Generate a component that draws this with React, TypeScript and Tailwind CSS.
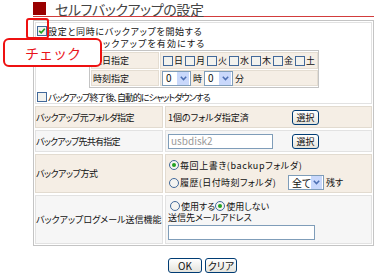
import React from "react";

function Cb({ checked = false }: { checked?: boolean }) {
  return (
    <span className="inline-flex items-center justify-center w-[10px] h-[10px] shrink-0 border border-[#42699a] bg-[#f2f2ee]">
      {checked && (
        <svg width="8" height="8" viewBox="0 0 8 8">
          <path d="M1.2 3.8 L3.2 5.8 L6.8 1.8" fill="none" stroke="#21a121" strokeWidth="1.7" />
        </svg>
      )}
    </span>
  );
}

function Radio({ checked = false }: { checked?: boolean }) {
  return (
    <span className="inline-flex items-center justify-center w-[10px] h-[10px] shrink-0 rounded-full border border-[#42699a] bg-[#f4f4f1]">
      {checked && <span className="w-[4px] h-[4px] rounded-full bg-[#21a121]" />}
    </span>
  );
}

function Sel({ value, w }: { value: string; w: string }) {
  return (
    <span className={"inline-flex items-center h-[15px] border border-[#7f9db9] bg-white shrink-0 " + w}>
      <span className="flex-1 pl-[3px] text-[10px] whitespace-nowrap">{value}</span>
      <span className="flex items-center justify-center w-[12px] h-[13px] bg-[#c9d8fb] mr-px">
        <svg width="7" height="5" viewBox="0 0 7 5">
          <path d="M0.8 0.8 L3.5 3.6 L6.2 0.8" fill="none" stroke="#4d6fb3" strokeWidth="1.5" />
        </svg>
      </span>
    </span>
  );
}

function Btn({ label, w }: { label: string; w: string }) {
  return (
    <span
      className={
        "inline-flex items-center justify-center h-[15px] rounded-[3px] border border-[#003c74] bg-linear-to-b from-white to-[#e4e3dc] text-[9px] shrink-0 " +
        w
      }
    >
      {label}
    </span>
  );
}

const days = ["日", "月", "火", "水", "木", "金", "土"];

export default function App() {
  return (
    <div className="relative w-[380px] h-[277px] bg-white overflow-hidden text-[9px] leading-none text-[#111] [font-family:'Noto_Sans_CJK_JP',sans-serif] [font-feature-settings:'palt']">
      <div className="ml-[33px] w-[341px] pt-[2px]">
        {/* title */}
        <div className="flex items-center h-[13px]">
          <div className="w-[13px] h-[13px] bg-[#990000]" />
          <div className="ml-[9px] text-[14px] tracking-[-0.4px] text-[#444]">セルフバックアップの設定</div>
        </div>
        <div className="mt-[1px] h-px bg-[#d23c3c]" />

        {/* panel */}
        <div className="mt-[3px] border border-[#c4c4c4] p-px flex flex-col gap-[2px]">
          {/* top cell */}
          <div className="h-[82px] border border-[#e2e2e2] px-px pt-[2px]">
            <div className="flex items-center h-[12px] gap-px">
              <Cb checked />
              <span className="tracking-[0.7px]">設定と同時にバックアップを開始する</span>
            </div>
            <div className="flex items-center h-[12px] pl-[66px]">
              <span className="tracking-[1.1px]">ックアップを有効にする</span>
            </div>
            <div className="ml-[52px] mt-px w-[230px] border border-[#c4c4c4] p-px grid grid-cols-[68px_1fr] grid-rows-[17px_16px] gap-px bg-white">
              <div className="bg-[#f5eee5] border border-[#e4ddd2] flex items-center pl-px">曜日指定</div>
              <div className="bg-[#f5eee5] border border-[#e4ddd2] flex items-center pl-[2px]">
                {days.map((d) => (
                  <span key={d} className="flex items-center w-[22px] gap-px">
                    <Cb />
                    <span>{d}</span>
                  </span>
                ))}
              </div>
              <div className="bg-[#f5eee5] border border-[#e4ddd2] flex items-center pl-px">時刻指定</div>
              <div className="bg-[#f5eee5] border border-[#e4ddd2] flex items-center pl-px gap-[2px]">
                <Sel value="0" w="w-[29px]" />
                <span>時</span>
                <Sel value="0" w="w-[29px]" />
                <span>分</span>
              </div>
            </div>
            <div className="flex items-center h-[12px] gap-px mt-[3px]">
              <Cb />
              <span className="tracking-[-1px]">バックアップ終了後、自動的にシャットダウンする</span>
            </div>
          </div>

          {/* row 1 */}
          <div className="grid grid-cols-[128px_1fr] gap-[2px] h-[22px]">
            <div className="bg-[#f5eee5] border border-[#e2dbd0] flex items-center tracking-[-0.6px]">バックアップ元フォルダ指定</div>
            <div className="bg-[#f5eee5] border border-[#e2dbd0] flex items-center pl-[2px]">
              <span className="w-[124px]">1個のフォルダ指定済</span>
              <Btn label="選択" w="w-[27px]" />
            </div>
          </div>

          {/* row 2 */}
          <div className="grid grid-cols-[128px_1fr] gap-[2px] h-[22px]">
            <div className="bg-[#f6f6f6] border border-[#e2e2e2] flex items-center tracking-[-0.8px]">バックアップ先共有指定</div>
            <div className="bg-[#f6f6f6] border border-[#e2e2e2] flex items-center pl-[2px]">
              <span className="w-[105px] h-[15px] border border-[#7f9db9] bg-white flex items-center pl-[2px] text-[#9a9a9a] text-[10px]">
                usbdisk2
              </span>
              <span className="w-[19px]" />
              <Btn label="選択" w="w-[27px]" />
            </div>
          </div>

          {/* row 3 */}
          <div className="grid grid-cols-[128px_1fr] gap-[2px] h-[39px]">
            <div className="bg-[#f5eee5] border border-[#e2dbd0] flex items-center tracking-[-0.5px]">バックアップ方式</div>
            <div className="bg-[#f5eee5] border border-[#e2dbd0] flex flex-col pl-[3px] pt-[3px] gap-[3px]">
              <div className="flex items-center h-[14px] gap-px">
                <Radio checked />
                <span className="tracking-[0.6px]">毎回上書き(backupフォルダ)</span>
              </div>
              <div className="flex items-center h-[15px]">
                <Radio />
                <span className="w-[109px] pl-px tracking-[0.4px]">履歴(日付時刻フォルダ)</span>
                <Sel value="全て" w="w-[36px]" />
                <span className="ml-[2px]">残す</span>
              </div>
            </div>
          </div>

          {/* row 4 */}
          <div className="grid grid-cols-[128px_1fr] gap-[2px] h-[49px]">
            <div className="bg-[#f6f6f6] border border-[#e2e2e2] flex items-center">バックアップログメール送信機能</div>
            <div className="bg-[#f6f6f6] border border-[#e2e2e2] flex flex-col pl-[2px] pt-[4px]">
              <div className="flex items-center h-[12px] pl-[2px]">
                <Radio />
                <span className="ml-px">使用する</span>
                <Radio checked />
                <span className="ml-px">使用しない</span>
              </div>
              <div className="flex items-center h-[11px]">送信先メールアドレス</div>
              <span className="mt-[2px] w-[147px] h-[15px] border border-[#7f9db9] bg-white" />
            </div>
          </div>
        </div>

        {/* buttons */}
        <div className="mt-[12px] ml-[135px] flex gap-[3px]">
          <Btn label="OK" w="w-[34px] h-[14px] text-[10px]" />
          <Btn label="クリア" w="w-[32px] h-[14px] text-[10px]" />
        </div>
      </div>

      {/* highlight overlays */}
      <div className="absolute left-[26px] top-[18px] w-[23px] h-[21px] border-2 border-[#ee1111] rounded-[3px]" />
      <div className="absolute left-[3px] top-[38px] w-[99px] h-[29px] border-2 border-[#ee1111] rounded-[6px] bg-white flex items-center pl-[20px] text-[14px] text-[#e8141b] [font-feature-settings:normal]">
        チェック
      </div>
    </div>
  );
}
